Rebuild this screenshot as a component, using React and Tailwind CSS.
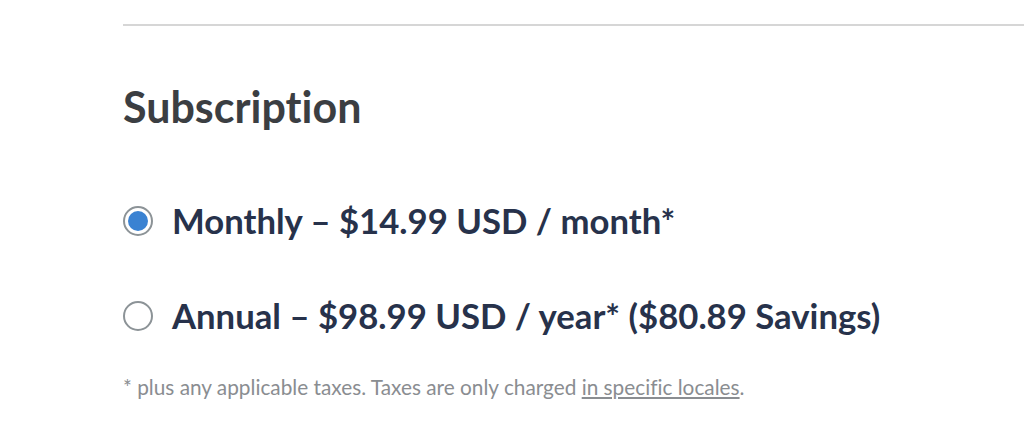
export default function App() {
  return (
    <div className="w-[1024px] h-[442px] bg-white overflow-hidden [font-variant-ligatures:none]" style={{ fontFamily: "Lato, 'Noto Sans', sans-serif" }}>
      <div className="pl-[123px] pt-[24px]">
        <div className="h-[2px] bg-[#d6d6d6]" />
        <h2 className="mt-[55px] text-[43px] leading-[52px] font-bold text-[#3b3e42]">Subscription</h2>
        <div className="mt-[70px] flex flex-col gap-[59px]">
          <label className="flex items-center gap-[19px]">
            <span className="w-[30px] h-[30px] rounded-full border-[2px] border-[#8c9397] flex items-center justify-center">
              <span className="w-[20px] h-[20px] rounded-full bg-[#3a82d2]" />
            </span>
            <span className="text-[34.7px] leading-[36px] font-bold text-[#27324b]">Monthly – $14.99 USD / month*</span>
          </label>
          <label className="flex items-center gap-[19px]">
            <span className="w-[30px] h-[30px] rounded-full border-[2px] border-[#8c9397]" />
            <span className="text-[34.7px] leading-[36px] font-bold text-[#27324b]">Annual – $98.99 USD / year* ($80.89 Savings)</span>
          </label>
        </div>
        <p className="mt-[40px] text-[20.8px] leading-[26px] text-[#8a8d91]">
          * plus any applicable taxes. Taxes are only charged <span className="underline">in specific locales</span>.
        </p>
      </div>
    </div>
  );
}
